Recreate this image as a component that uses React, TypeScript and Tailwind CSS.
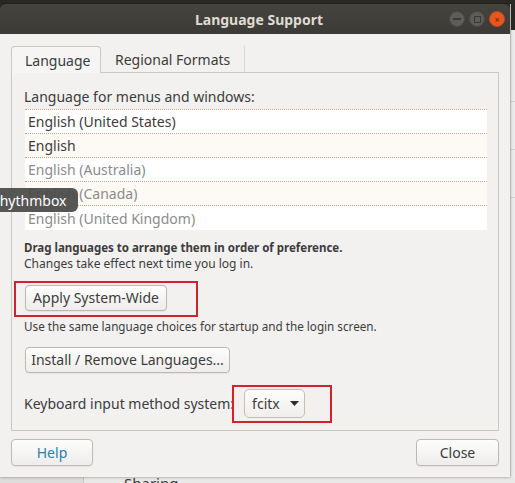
import clsx from "clsx";

const languages = [
  { name: "English (United States)", active: true },
  { name: "English", active: true },
  { name: "English (Australia)", active: false },
  { name: "English (Canada)", active: false },
  { name: "English (United Kingdom)", active: false },
];

const Btn = ({ children, className }: { children: React.ReactNode; className?: string }) => (
  <button
    className={clsx(
      "h-[26px] whitespace-nowrap rounded-[4px] border border-[#bfb8b1] bg-linear-to-b from-[#fdfdfc] to-[#eeedeb] text-[14px] leading-none text-[#3c3c3c] shadow-[0_1px_1px_rgba(0,0,0,0.06)]",
      className
    )}
  >
    {children}
  </button>
);

const TitleBar = () => (
  <div className="h-[30px] rounded-t-[6px] bg-linear-to-b from-[#45443f] to-[#3b3a36] flex items-center relative">
    <div className="flex-1 text-center text-[14px] font-bold text-[#dfdbd2] pl-[8px]">Language Support</div>
    {/* window controls */}
    <div className="absolute right-[5px] top-[7px] flex gap-[4px]">
      <div className="w-[16px] h-[16px] rounded-full bg-[#5e5d59] border border-[#4a4945] flex items-center justify-center">
        <div className="w-[8px] h-[2px] bg-[#3a3935]" />
      </div>
      <div className="w-[16px] h-[16px] rounded-full bg-[#5e5d59] border border-[#4a4945] flex items-center justify-center">
        <div className="w-[7px] h-[7px] border border-[#3a3935]" />
      </div>
      <div className="w-[16px] h-[16px] rounded-full bg-[#e8571f] border border-[#c4461a] flex items-center justify-center text-[9px] font-bold leading-none text-[#7a2a0c]">
        ×
      </div>
    </div>
  </div>
);

export default function App() {
  return (
    <div className="w-[515px] h-[483px] overflow-hidden relative flex flex-col bg-[#2a2926] font-['Noto_Sans',sans-serif]">
      <div className="h-[4px] shrink-0" />
      <div className="flex shrink-0">
        {/* WINDOW */}
        <div className="w-[510px] h-[473px] flex flex-col shadow-[0_0_3px_rgba(0,0,0,0.4)] relative z-10">
          <TitleBar />
          <div className="flex-1 bg-[#f2f1f0] px-[11px] pt-[12px] flex flex-col">
            {/* TABS */}
            <div className="flex h-[26px] text-[14px] text-[#3c3c3c]">
              <div className="w-[90px] -mb-px relative z-10 border border-b-0 border-[#cdc7c2] rounded-t-[4px] bg-[#f6f5f4] flex items-center pl-[13px]">
                Language
              </div>
              <div className="w-[144px] flex items-center pl-[14px] border-r border-[#dcd7d2]">Regional Formats</div>
            </div>

            {/* PANEL */}
            <div className="h-[359px] border border-[#cdc7c2] bg-[#f2f1f0] pl-[12px] pr-[11px] pt-[12px] flex flex-col text-[#3c3c3c]">
              <div className="h-[24px] text-[14px] flex items-center -mt-[1px]">Language for menus and windows:</div>
              <div className="mt-[1px] ml-[1px] h-[118px] bg-white border-t border-dotted border-[#c9a58a]">
                {languages.map((l, i) => (
                  <div
                    key={l.name}
                    className={clsx(
                      "h-[24px] flex items-center pl-[3px] text-[14px]",
                      i < languages.length - 1 && "border-b border-dotted border-[#c9a58a]",
                      i % 2 === 1 ? "bg-[#fdfaf6]" : "bg-white",
                      l.active ? "text-[#3c3c3c]" : "text-[#8c8c8c]"
                    )}
                  >
                    {l.name}
                  </div>
                ))}
              </div>

              <div className="mt-[13px] text-[11.5px] font-bold leading-[16px]">Drag languages to arrange them in order of preference.</div>
              <div className="text-[12px] leading-[15px]">Changes take effect next time you log in.</div>

              <div className="mt-[14px] ml-[1px] relative self-start">
                <Btn className="w-[142px]">Apply System-Wide</Btn>
                <div className="absolute -left-[11px] -top-[4px] w-[184px] h-[36px] border-2 border-[#d2222c] pointer-events-none" />
              </div>
              <div className="mt-[7px] text-[11.7px] leading-[16px]">Use the same language choices for startup and the login screen.</div>

              <div className="mt-[13px] ml-[1px] self-start">
                <Btn className="w-[205px]">Install / Remove Languages...</Btn>
              </div>

              <div className="mt-[16px] flex items-center">
                <span className="text-[14px]">Keyboard input method system:</span>
                <div className="relative ml-[10px]">
                  <button className="h-[29px] w-[61px] rounded-[5px] border border-[#c9bdb2] bg-linear-to-b from-[#fdfdfc] to-[#efeeec] text-[14px] text-[#3c3c3c] flex items-center pl-[7px] gap-[10px]">
                    fcitx
                    <svg width="9" height="5" viewBox="0 0 9 5">
                      <path d="M0 0h9L4.5 5z" fill="#2e2e2e" />
                    </svg>
                  </button>
                  <div className="absolute -left-[12px] -top-[4px] w-[100px] h-[38px] border-2 border-[#d2222c] pointer-events-none" />
                </div>
              </div>
            </div>

            {/* FOOTER BUTTONS */}
            <div className="mt-[8px] flex justify-between">
              <Btn className="w-[82px] h-[27px] !text-[#2b7fae]">Help</Btn>
              <Btn className="w-[83px] h-[27px]">Close</Btn>
            </div>
          </div>
        </div>

        {/* BACKGROUND APP (right edge) */}
        <div className="flex-1 bg-[#ececec] border-l border-[#d8d8d8] flex flex-col">
          <div className="h-[26px] bg-[#2a2926]" />
          <div className="h-[72px] border-b border-[#d0d0d0]" />
          <div className="h-[48px] border-b border-[#d0d0d0]" />
          <div className="h-[48px] border-b border-[#d0d0d0]" />
        </div>
      </div>

      {/* BACKGROUND APP (bottom edge) */}
      <div className="flex-1 flex bg-[#e9e9e8] text-[15px] text-[#3c3c3c] overflow-hidden">
        <div className="w-[84px] bg-[#dedddc] border-r border-[#c8c8c8]" />
        <div className="pl-[40px] leading-none -mt-[1px]">Sharing</div>
      </div>

      {/* TOOLTIP from background dock */}
      <div className="absolute left-0 top-[188px] h-[24px] w-[78px] rounded-r-[6px] bg-[#4d4d4b]/95 text-white text-[14px] flex items-center z-20 overflow-hidden">
        <span className="-ml-[9px]">Rhythmbox</span>
      </div>
    </div>
  );
}
